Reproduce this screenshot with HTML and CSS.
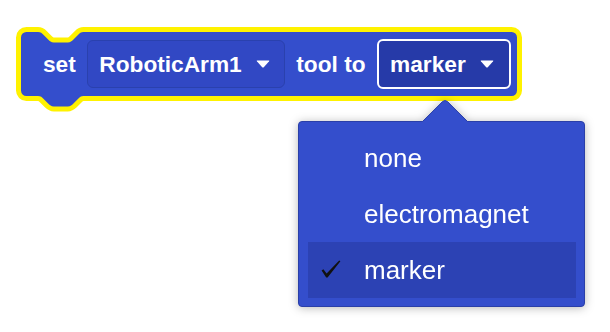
FILE: index.html
```html
<!DOCTYPE html>
<html>
<head>
<meta charset="utf-8">
<link rel="stylesheet" href="styles.css">
</head>
<body>
<div class="stage">
  <div class="block">
    <svg class="block-shape" width="496" height="64" viewBox="0 0 496 64">
      <path class="block-path" d="M0,5.4 A5.4,5.4 0 0 1 5.4,0 H17 c2.7,0 4,1.3 5.4,2.7 l5,5 c1.3,1.3 2.7,2.7 5.4,2.7 h14 c2.7,0 4,-1.3 5.4,-2.7 l5,-5 c1.3,-1.3 2.7,-2.7 5.4,-2.7 H490.6 A5.4,5.4 0 0 1 496,5.4 V58.6 A5.4,5.4 0 0 1 490.6,64 H62.6 c-2.7,0 -4,1.3 -5.4,2.7 l-5,5 c-1.3,1.3 -2.7,2.7 -5.4,2.7 h-14 c-2.7,0 -4,-1.3 -5.4,-2.7 l-5,-5 c-1.3,-1.3 -2.7,-2.7 -5.4,-2.7 H5.4 A5.4,5.4 0 0 1 0,58.6 Z"/>
    </svg>
    <span class="label">set</span>
    <div class="field">
      <span class="field-text">RoboticArm1</span>
      <svg class="caret" width="14" height="8" viewBox="0 0 14 8"><path d="M1.2,0.5 H12.8 Q13.8,0.5 13.1,1.3 L7.8,7.2 Q7,8 6.2,7.2 L0.9,1.3 Q0.2,0.5 1.2,0.5Z"/></svg>
    </div>
    <span class="label">tool to</span>
    <div class="field field-open">
      <span class="field-text">marker</span>
      <svg class="caret" width="14" height="8" viewBox="0 0 14 8"><path d="M1.2,0.5 H12.8 Q13.8,0.5 13.1,1.3 L7.8,7.2 Q7,8 6.2,7.2 L0.9,1.3 Q0.2,0.5 1.2,0.5Z"/></svg>
    </div>
  </div>

  <div class="menu-wrap">
    <div class="menu">
      <svg class="menu-arrow" width="46" height="23" viewBox="0 0 46 23">
        <path class="arrow-fill" d="M0.5,23 L0.5,21.5 L20.5,1.6 Q23,-0.6 25.5,1.6 L45.5,21.5 L45.5,23 Z"/>
        <path class="arrow-edge" d="M0.5,21.5 L20.5,1.6 Q23,-0.6 25.5,1.6 L45.5,21.5"/>
      </svg>
      <div class="item"><span class="check-cell"></span><span class="item-text">none</span></div>
      <div class="item"><span class="check-cell"></span><span class="item-text">electromagnet</span></div>
      <div class="item item-selected">
        <span class="check-cell">
          <svg class="check" width="20" height="18" viewBox="0 0 20 18"><path d="M0.6,10.4 L2.4,9.3 L5.6,13.6 L18.2,0.6 L19.4,1.3 L6.6,17.4 L5.2,17.6 Z"/></svg>
        </span>
        <span class="item-text">marker</span>
      </div>
    </div>
  </div>
</div>
</body>
</html>
```

FILE: styles.css
```css
html, body {
  margin: 0;
  padding: 0;
  background: #ffffff;
}

.stage {
  position: relative;
  width: 610px;
  height: 332px;
  padding: 32px 0 0 21px;
  box-sizing: border-box;
  font-family: "Liberation Sans", Arial, Helvetica, sans-serif;
}

.block {
  position: relative;
  display: inline-flex;
  align-items: center;
  gap: 11.5px;
  width: 496px;
  height: 64px;
  box-sizing: border-box;
  padding-left: 22px;
}

.block-shape {
  position: absolute;
  left: 0;
  top: 0;
  overflow: visible;
  z-index: 0;
}

.block-path {
  fill: #344ecc;
  stroke: #fff200;
  stroke-width: 10px;
  stroke-linejoin: round;
  paint-order: stroke;
}

.label, .field {
  position: relative;
  z-index: 1;
}

.label {
  color: #ffffff;
  font-weight: bold;
  font-size: 22.7px;
  white-space: nowrap;
}

.field {
  display: flex;
  align-items: center;
  height: 48px;
  box-sizing: border-box;
  border: 1px solid #2a41ae;
  border-radius: 6px;
  background: #3148c4;
  padding: 0 14px 0 11px;
}

.field-text {
  color: #ffffff;
  font-weight: bold;
  font-size: 22.7px;
  white-space: nowrap;
  margin-right: 14px;
}

.field-open {
  height: 50px;
  border: 2px solid #ffffff;
  background: #263aa8;
  padding: 0 15px 0 11px;
}

.field-open .field-text {
  margin-right: 14px;
}

.caret {
  display: block;
  fill: #ffffff;
}

.menu-wrap {
  position: absolute;
  left: 298px;
  top: 121px;
  filter: drop-shadow(0 1px 5px rgba(0, 0, 0, 0.28));
}

.menu {
  position: relative;
  width: 287px;
  height: 186px;
  box-sizing: border-box;
  background: #344ecc;
  border: 1px solid #2a3fa8;
  border-radius: 4px;
  padding: 8px 8px 8px 9px;
}

.menu-arrow {
  position: absolute;
  left: 123px;
  top: -22px;
  overflow: visible;
}

.arrow-fill {
  fill: #344ecc;
}

.arrow-edge {
  fill: none;
  stroke: #2a3fa8;
  stroke-width: 1px;
}

.item {
  display: flex;
  align-items: center;
  height: 56px;
}

.item-selected {
  background: #2c42b4;
}

.check-cell {
  display: flex;
  align-items: center;
  width: 56px;
  padding-left: 13px;
  box-sizing: border-box;
  flex: none;
}

.check {
  display: block;
  fill: #111111;
  margin-top: -3px;
}

.item-text {
  color: #ffffff;
  font-size: 26px;
  white-space: nowrap;
}
```
